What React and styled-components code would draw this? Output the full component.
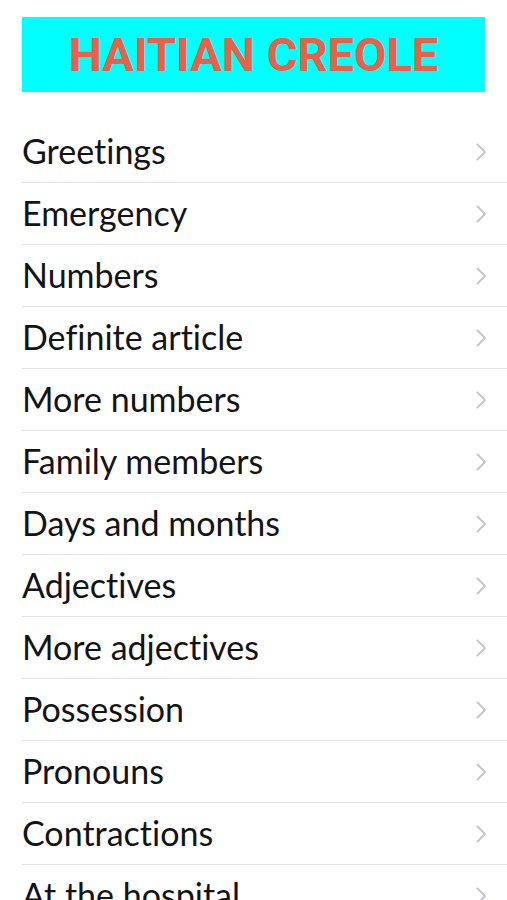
import React from "react";
import styled, { createGlobalStyle } from "styled-components";

const Global = createGlobalStyle`
  html, body { margin: 0; padding: 0; background: #fff; }
  body { font-family: Lato, "Noto Sans", sans-serif; overflow: hidden; }
`;

const Page = styled.div`
  width: 507px;
  height: 900px;
  overflow: hidden;
  background: #fff;
  padding-top: 17px;
  box-sizing: border-box;
`;

const Banner = styled.div`
  margin: 0 22px;
  height: 75px;
  background: #00ffff;
  display: flex;
  align-items: center;
  justify-content: center;
`;

const Title = styled.h1`
  margin: 0;
  font-family: Roboto, "Liberation Sans", sans-serif;
  font-weight: 700;
  font-size: 47px;
  color: #ee5f47;
  letter-spacing: 0;
  line-height: 1;
`;

const List = styled.ul`
  list-style: none;
  margin: 29px 0 0 22px;
  padding: 0;
`;

const Row = styled.li`
  height: 61px;
  border-bottom: 1px solid #e3e3e6;
  display: flex;
  align-items: center;
  justify-content: space-between;
  padding-right: 20px;
`;

const Label = styled.span`
  font-family: Lato, "Noto Sans", sans-serif;
  font-size: 34px;
  color: #141414;
  letter-spacing: 0;
  margin-top: -2px;
  font-variant-ligatures: none;
  font-feature-settings: "liga" 0, "clig" 0;
  white-space: nowrap;
`;

const Chevron = () => (
  <svg width="11" height="18" viewBox="0 0 11 18">
    <path d="M1.5 1.5 L9 9 L1.5 16.5" fill="none" stroke="#c5c5c8" strokeWidth="2" strokeLinecap="round" strokeLinejoin="round" />
  </svg>
);

const items = [
  "Greetings",
  "Emergency",
  "Numbers",
  "Definite article",
  "More numbers",
  "Family members",
  "Days and months",
  "Adjectives",
  "More adjectives",
  "Possession",
  "Pronouns",
  "Contractions",
  "At the hospital",
];

export default function App() {
  return (
    <>
      <Global />
      <Page>
        <Banner>
          <Title>HAITIAN CREOLE</Title>
        </Banner>
        <List>
          {items.map((t) => (
            <Row key={t}>
              <Label>{t}</Label>
              <Chevron />
            </Row>
          ))}
        </List>
      </Page>
    </>
  );
}
